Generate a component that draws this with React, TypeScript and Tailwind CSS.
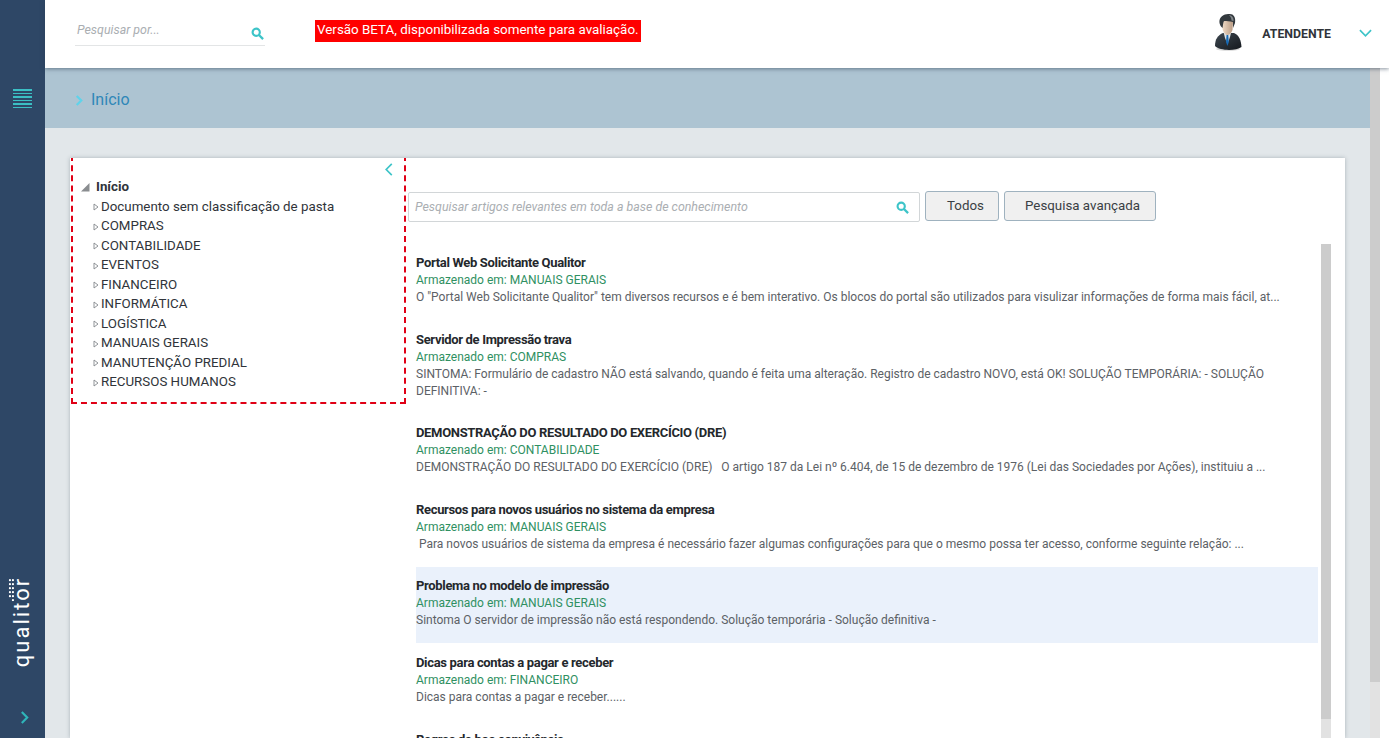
import React from "react";

const Search = ({ className = "" }: { className?: string }) => (
  <svg viewBox="0 0 14 14" className={className} fill="none" stroke="#3dc4c8">
    <circle cx="5.6" cy="5.6" r="3.9" strokeWidth="2.3" />
    <path d="M8.6 8.6 L13 13" strokeWidth="2.5" />
  </svg>
);

const tree = [
  "Documento sem classificação de pasta",
  "COMPRAS",
  "CONTABILIDADE",
  "EVENTOS",
  "FINANCEIRO",
  "INFORMÁTICA",
  "LOGÍSTICA",
  "MANUAIS GERAIS",
  "MANUTENÇÃO PREDIAL",
  "RECURSOS HUMANOS",
];

const articles = [
  {
    t: "Portal Web Solicitante Qualitor",
    s: "MANUAIS GERAIS",
    d: 'O "Portal Web Solicitante Qualitor" tem diversos recursos e é bem interativo. Os blocos do portal são utilizados para visulizar informações de forma mais fácil, at...',
    h: "h-[77px]",
  },
  {
    t: "Servidor de Impressão trava",
    s: "COMPRAS",
    d: "SINTOMA: Formulário de cadastro NÃO está salvando, quando é feita uma alteração. Registro de cadastro NOVO, está OK! SOLUÇÃO TEMPORÁRIA: - SOLUÇÃO DEFINITIVA: -",
    h: "h-[93px]",
  },
  {
    t: "DEMONSTRAÇÃO DO RESULTADO DO EXERCÍCIO (DRE)",
    s: "CONTABILIDADE",
    d: "DEMONSTRAÇÃO DO RESULTADO DO EXERCÍCIO (DRE)   O artigo 187 da Lei nº 6.404, de 15 de dezembro de 1976 (Lei das Sociedades por Ações), instituiu a ...",
    h: "h-[77px]",
  },
  {
    t: "Recursos para novos usuários no sistema da empresa",
    s: "MANUAIS GERAIS",
    d: " Para novos usuários de sistema da empresa é necessário fazer algumas configurações para que o mesmo possa ter acesso, conforme seguinte relação: ...",
    h: "h-[76px]",
  },
  {
    t: "Problema no modelo de impressão",
    s: "MANUAIS GERAIS",
    d: "Sintoma O servidor de impressão não está respondendo. Solução temporária - Solução definitiva -",
    h: "h-[76px] mb-[1px]",
    active: true,
  },
  {
    t: "Dicas para contas a pagar e receber",
    s: "FINANCEIRO",
    d: "Dicas para contas a pagar e receber......",
    h: "h-[77px]",
  },
  { t: "Regras de boa convivência", s: "MANUAIS GERAIS", d: "", h: "h-[77px]" },
];

const dots: [number, number][] = [
  [1.2, 1], [1.2, 5], [4.2, 5], [1.2, 9], [4.2, 9], [1.2, 13], [4.2, 13], [1.2, 17], [4.2, 17], [1.2, 21], [4.2, 21],
];

export default function App() {
  return (
    <div className="flex h-[738px] w-[1389px] overflow-hidden bg-white font-['Roboto',sans-serif] text-[13px]">
      <aside className="flex w-[45px] shrink-0 flex-col items-center bg-[#2e4766]">
        <div className="mt-[89px] flex w-[19px] flex-col gap-[2px]">
          {[0, 1, 2, 3, 4, 5].map((i) => (
            <div key={i} className="h-[1.5px] bg-[#3bbfc4]" />
          ))}
        </div>
        <div className="mt-auto flex h-[90px] w-[45px] items-center justify-center">
          <div className="relative -rotate-90">
            <span className="block whitespace-nowrap text-[22px] font-normal leading-none tracking-[2px] text-white">
              qualitor
            </span>
            <svg viewBox="0 0 24 6" className="absolute -top-[3px] right-0 h-[6px] w-[24px]" fill="#fff">
              {dots.map(([y, x]) => (
                <circle key={`${x}-${y}`} cx={x} cy={6 - y} r="1.1" />
              ))}
            </svg>
          </div>
        </div>
        <svg viewBox="0 0 10 14" className="mb-[14px] mt-[44px] h-[13px] w-[9px] translate-x-[2px]" fill="none" stroke="#2fb5ba" strokeWidth="2.4">
          <path d="M2 1 L8 7 L2 13" />
        </svg>
      </aside>

      <div className="flex min-w-0 flex-1 flex-col">
        <header className="relative z-10 flex h-[68px] shrink-0 bg-white pl-[30px] shadow-[0_1px_4px_rgba(40,60,80,0.55)]">
          <div className="mt-[15px] flex h-[31px] w-[190px] items-center justify-between border-b border-[#e3e5e6] pl-[2px] pr-[1px]">
            <span className="mt-[1px] text-[12.4px] italic text-[#aaaeb2]">Pesquisar por...</span>
            <Search className="mt-[7px] h-[13px] w-[13px]" />
          </div>
          <div className="ml-[50px] mt-[20px] h-[22px] bg-[#ff0000] px-[2px] text-[13.4px] leading-[20px] text-white">
            Versão BETA, disponibilizada somente para avaliação.
          </div>
          <div className="ml-auto mr-[17px] flex h-[68px] items-center">
            <svg viewBox="0 0 40 48" className="mb-[4px] h-[48px] w-[40px]">
              <defs>
                <linearGradient id="suit" x1="0" y1="0" x2="1" y2="1">
                  <stop offset="0" stopColor="#3d4750" />
                  <stop offset="1" stopColor="#14181d" />
                </linearGradient>
                <linearGradient id="skin" x1="0" y1="0" x2="1" y2="0">
                  <stop offset="0" stopColor="#f1dcc8" />
                  <stop offset="1" stopColor="#b99b83" />
                </linearGradient>
              </defs>
              <ellipse cx="20" cy="41" rx="12" ry="1.8" fill="#d8d8d8" />
              <path d="M7 38 C7 31 10 27 15 25 L26 25 C31 27 33 32 33.5 39 C28 43 12 43 7 38 Z" fill="url(#suit)" />
              <path d="M15.5 24 L17 30 L19.5 36 L22 29 L23.5 23 Z" fill="#dfe4e8" />
              <path d="M18.6 26.5 L20.2 26.5 L20.8 34 L19.4 38 L18 34 Z" fill="#1669b4" />
              <path d="M14 15 C14 10 25 10 25 14 L24.5 22 C23 26 20.5 27.5 19 27 C17 26.5 15 23.5 14.5 21 Z" fill="url(#skin)" />
              <path d="M11.5 15 C10.5 8.5 17 5.5 21 6 C25.5 5.5 28 9 27 15 L25 20 L25 14 C22 13 18 13.5 16 13 C15 15 15 17 14.6 20 C13 19 12 17 11.5 15 Z" fill="#33393e" />
              <path d="M21 7 C24 7.5 26 10 25.5 13 L23.5 12.5 C23.5 10.5 22.5 8.5 21 7 Z" fill="#80868a" />
            </svg>
            <span className="ml-[14px] text-[12.3px] font-bold text-[#30343a]">ATENDENTE</span>
            <svg viewBox="0 0 14 8" className="ml-[28px] mt-[-2px] h-[8px] w-[13px]" fill="none" stroke="#3dc4c8" strokeWidth="1.8">
              <path d="M1 1 L7 7 L13 1" />
            </svg>
          </div>
        </header>

        <div className="flex min-h-0 flex-1">
          <main className="flex min-w-0 flex-1 flex-col bg-[#e2e7ea]">
            <div className="flex h-[60px] shrink-0 items-center bg-[#adc4d2] pl-[30px] pt-[4px]">
              <svg viewBox="0 0 8 12" className="h-[11px] w-[8px]" fill="none" stroke="#5fd3ea" strokeWidth="2.4">
                <path d="M1.5 1 L6.5 6 L1.5 11" />
              </svg>
              <span className="ml-[8px] text-[16px] text-[#2f87b8]">Início</span>
            </div>

            <section className="ml-[25px] mr-[25px] mt-[30px] flex min-h-0 flex-1 overflow-hidden bg-white shadow-[0_0_4px_rgba(100,115,125,0.45)]">
              <div className="-mt-[3px] ml-[1px] h-[249px] w-[335px] shrink-0 border-2 border-dashed border-[#e00016] text-[13.33px] text-[#30343a]">
                <div className="flex justify-end pr-[11px] pt-[6px]">
                  <svg viewBox="0 0 8 14" className="h-[13px] w-[8px]" fill="none" stroke="#3dc4c8" strokeWidth="1.8">
                    <path d="M7 1 L1 7 L7 13" />
                  </svg>
                </div>
                <div className="mt-[1px] flex h-[20px] items-center pl-[7px] font-bold">
                  <svg viewBox="0 0 10 10" className="h-[10px] w-[10px]">
                    <path d="M9.5 1 L9.5 9.5 L1 9.5 Z" fill="#8a8d90" />
                  </svg>
                  <span className="ml-[6px]">Início</span>
                </div>
                <ul className="-mt-[0.25px]">
                  {tree.map((n) => (
                    <li key={n} className="flex h-[19.5px] items-center pl-[20px] leading-none">
                      <svg viewBox="0 0 6 8" className="mt-[1px] h-[8px] w-[6px] shrink-0" fill="#fff" stroke="#85898d" strokeWidth="0.9">
                        <path d="M1 1 L5 4 L1 7 Z" />
                      </svg>
                      <span className="ml-[2px]">{n}</span>
                    </li>
                  ))}
                </ul>
              </div>

              <div className="min-w-0 flex-1 pl-[2px]">
                <div className="mt-[33px] flex items-start">
                  <div className="mt-[1px] flex h-[30px] w-[512px] items-center justify-between rounded-[2px] border border-[#d2d6d8] pl-[6px] pr-[10px]">
                    <span className="text-[12.4px] italic text-[#aaaeb2]">
                      Pesquisar artigos relevantes em toda a base de conhecimento
                    </span>
                    <Search className="h-[13px] w-[13px]" />
                  </div>
                  <button className="ml-[5px] h-[30px] w-[74px] rounded-[3px] border border-[#9fb2bf] bg-[#f0f0f0] pl-[7px] text-[13.33px] text-[#3a3f44]">
                    Todos
                  </button>
                  <button className="ml-[5px] h-[30px] w-[152px] rounded-[3px] border border-[#9fb2bf] bg-[#f0f0f0] pl-[5px] text-[13.33px] text-[#3a3f44]">
                    Pesquisa avançada
                  </button>
                </div>

                <div className="mt-[22px] flex h-[494px] overflow-hidden pl-[1px]">
                  <div className="ml-[7px] w-[902px] shrink-0">
                    {articles.map((a) => (
                      <article
                        key={a.t}
                        className={`${a.h} pt-[10px] text-[12px] leading-[17px] ${a.active ? "bg-[#eaf1fb]" : ""}`}
                      >
                        <h3 className="mb-[1px] text-[13px] font-bold tracking-[-0.33px] text-[#24282c]">{a.t}</h3>
                        <p className="text-[#2f9062]">Armazenado em: {a.s}</p>
                        <p className="whitespace-pre-wrap text-[#5c6166]">{a.d}</p>
                      </article>
                    ))}
                  </div>
                  <div className="ml-[3px] flex w-[10px] shrink-0 flex-col">
                    <div className="h-[475px] shrink-0 bg-[#cccccc]" />
                    <div className="flex-1 bg-[#e2e2e2]" />
                  </div>
                </div>
              </div>
            </section>
          </main>
          <div className="flex w-[19px] shrink-0 flex-col">
            <div className="h-[614px] w-[10px] bg-[#cccccc]" />
            <div className="w-[10px] flex-1 bg-[#e2e2e2]" />
          </div>
        </div>
      </div>
    </div>
  );
}
